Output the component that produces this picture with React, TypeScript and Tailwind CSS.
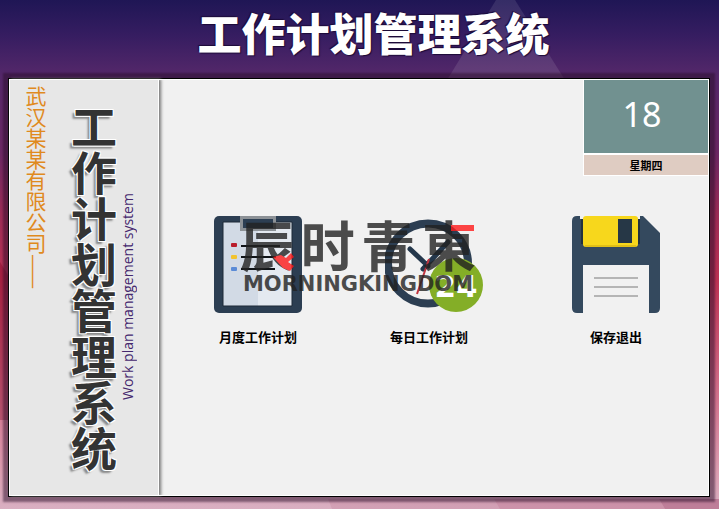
import type { ReactNode } from "react";

function Backdrop() {
  return (
    <svg
      className="absolute inset-0 -z-10 h-full w-full"
      viewBox="0 0 719 509"
      preserveAspectRatio="none"
      aria-hidden="true"
    >
      <defs>
        <linearGradient id="sky" x1="0" y1="0" x2="0" y2="1">
          <stop offset="0" stopColor="#1f1655" />
          <stop offset="0.07" stopColor="#361d61" />
          <stop offset="0.15" stopColor="#55286a" />
          <stop offset="0.3" stopColor="#6c2864" />
          <stop offset="0.42" stopColor="#9c2c56" />
          <stop offset="0.55" stopColor="#bd3354" />
          <stop offset="0.75" stopColor="#d06a86" />
          <stop offset="0.93" stopColor="#dc9fb2" />
          <stop offset="1" stopColor="#d9b0c2" />
        </linearGradient>
      </defs>
      <rect width="719" height="509" fill="url(#sky)" />
      <path d="M496 0H515L565 80H447Z" fill="#fff" opacity="0.1" />
      <path d="M0 262L8 275V420H0Z" fill="#7a0020" opacity="0.35" />
      <path d="M328 499H494L500 509H332Z" fill="#b86a88" opacity="0.2" />
      <path d="M494 499H659L665 509H500Z" fill="#b86a88" opacity="0.4" />
      <path d="M659 499H719V509H665Z" fill="#a85878" opacity="0.55" />
    </svg>
  );
}

function ClipboardIcon() {
  return (
    <svg className="h-[98px] w-[88px]" viewBox="0 0 88 98" aria-hidden="true">
      <rect width="88" height="97" rx="5" fill="#2c3e52" />
      <rect x="9" y="6" width="69" height="84" fill="#e4e9f0" />
      <path d="M9 6H44V90H9Z" fill="#d2dae5" />
      <path d="M9 6H78V90H9Z" fill="none" stroke="#1c2936" />
      <rect x="27.500" y="1.500" width="33" height="12" fill="#2c3e52" stroke="#8c9196" strokeWidth="3" />
      <g stroke="#101418" strokeWidth="2">
        <path d="M27 30H66M27 41H62M27 53H61" />
      </g>
      <rect x="17" y="27" width="6" height="4" rx="1" fill="#b91d2c" />
      <rect x="17" y="39" width="6" height="4" rx="1" fill="#f2c330" />
      <rect x="17" y="51" width="6" height="4" rx="1" fill="#5b8bd6" />
    </svg>
  );
}

function ClockIcon() {
  return (
    <svg className="h-[98px] w-[104px]" viewBox="0 0 104 98" aria-hidden="true">
      <circle cx="43" cy="47.500" r="40" fill="none" stroke="#2c3e52" strokeWidth="8" />
      <path d="M25 33L43 50M63 26L38 53" stroke="#24374b" strokeWidth="5" strokeLinecap="round" />
      <circle cx="71" cy="69" r="27" fill="#84ae27" />
      <path d="M44 43L32 78" stroke="#c0343f" strokeWidth="2" />
      <text
        x="71"
        y="81"
        textAnchor="middle"
        fill="#fff"
        className="font-['DejaVu_Sans',sans-serif] text-[31px] font-bold"
      >
        24
      </text>
    </svg>
  );
}

function FloppyIcon() {
  return (
    <svg className="h-[98px] w-[88px]" viewBox="0 0 88 98" aria-hidden="true">
      <path d="M5 0H8V3H68V0H71L88 17V92Q88 97 83 97H77H5Q0 97 0 92V5Q0 0 5 0Z" fill="#34495e" />
      <path d="M9 3H68V28H9Z" fill="#22313f" />
      <rect x="11" width="55" height="31" rx="3" fill="#f7d71c" />
      <path d="M13 30H64" stroke="#c9a713" />
      <rect x="46" y="3" width="14" height="24" fill="#263746" />
      <path d="M11 49H77V98H11Z" fill="#f1f1f1" />
      <path d="M22 62H66M22 71H66M22 80H66" stroke="#b5b5b5" strokeWidth="2" />
    </svg>
  );
}

function ActionButton({ label, children }: { label: string; children: ReactNode }) {
  return (
    <button type="button" className="flex cursor-pointer flex-col items-start gap-[14px]">
      {children}
      <span className="w-[88px] whitespace-nowrap text-center text-[13px] leading-[18px] font-bold text-black">
        {label}
      </span>
    </button>
  );
}

function Watermark() {
  return (
    <div className="pointer-events-none absolute top-[136px] left-[81px] w-[236px] text-[#222] opacity-80">
      <div className="flex h-14 items-center justify-between text-[54px] leading-[56px] font-bold">
        <span>辰</span>
        <span>时</span>
        <span>青</span>
        <span>東</span>
      </div>
      <div className="text-center font-['DejaVu_Sans',sans-serif] text-[21px] leading-6 font-bold">
        MORNINGKINGDOM
      </div>
      <svg className="absolute top-0 left-0 h-[86px] w-[236px]" viewBox="0 0 236 86" aria-hidden="true">
        <path d="M33 41L41 39L46 42L51 37L54 41L48 46L54 50L50 55L43 52Z" fill="#ff1a1a" />
        <rect x="211" y="9" width="23" height="6" fill="#ff1a1a" />
      </svg>
    </div>
  );
}

export default function App() {
  return (
    <div className="relative isolate flex min-h-screen flex-col px-2 pb-3 font-['Noto_Sans_CJK_SC',sans-serif]">
      <Backdrop />
      <header className="flex h-[78px] items-start justify-center pl-7">
        <h1 className="text-[44px] leading-[64px] font-black text-white [text-shadow:1px_1px_1px_#1c0a38,-1px_-1px_1px_#1c0a38]">
          工作计划管理系统
        </h1>
      </header>

      <div className="mr-px flex grow border border-black bg-[#f1f1f1] shadow-[0_0_2px_5px_rgba(40,12,40,0.5)]">
        <aside className="flex w-[150px] shrink-0 border border-white bg-[#e7e7e7] pt-1.5 pl-[14px] shadow-[2px_0_3px_#777]">
          <p className="text-[21px] leading-6 text-[#e08a1e] [writing-mode:vertical-rl]">
            武汉某某有限公司——
          </p>
          <h2 className="ml-[18px] pt-[18px] text-[46px] leading-[56px] font-bold text-[#333] [text-shadow:1px_1px_0_#fff,-1px_-1px_0_#fff,1px_-1px_0_#fff,-1px_1px_0_#fff,-3px_3px_2px_#888] [writing-mode:vertical-rl]">
            工作计划管理系统
          </h2>
          <p className="-ml-1 h-[314px] rotate-180 font-['Open_Sans',sans-serif] text-[14px] leading-5 whitespace-nowrap text-[#45286e] [writing-mode:vertical-rl]">
            Work plan management system
          </p>
        </aside>

        <main className="relative flex min-w-0 grow flex-col border border-l-0 border-white">
          <time className="-mt-px flex w-[125px] flex-col self-end border border-r-0 border-white text-center">
            <span className="flex h-[75px] items-center justify-center border-b-2 border-white bg-[#719190] pr-2 pb-1 font-['Noto_Sans',sans-serif] text-[34px] text-white">
              18
            </span>
            <span className="bg-[#dfccc2] text-[11px] leading-5 font-bold text-black">星期四</span>
          </time>

          <div className="flex justify-between pt-10 pr-12 pl-[55px]">
            <ActionButton label="月度工作计划">
              <ClipboardIcon />
            </ActionButton>
            <ActionButton label="每日工作计划">
              <ClockIcon />
            </ActionButton>
            <ActionButton label="保存退出">
              <FloppyIcon />
            </ActionButton>
          </div>
          <Watermark />
        </main>
      </div>
    </div>
  );
}
